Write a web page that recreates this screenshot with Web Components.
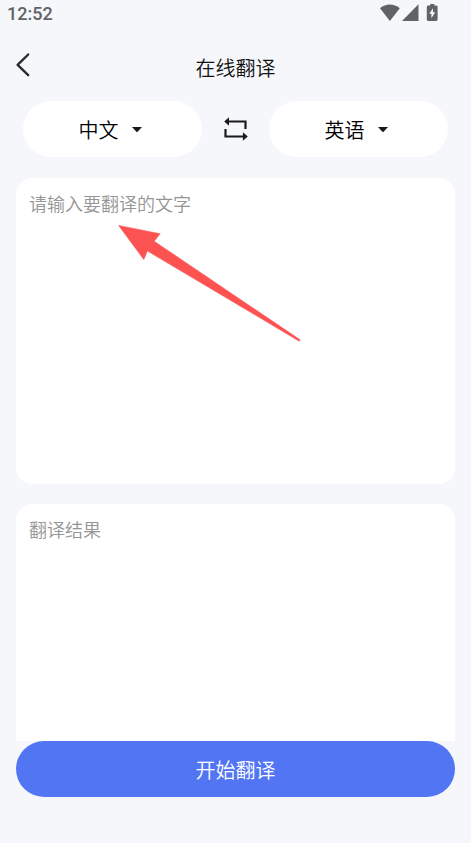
<!DOCTYPE html>
<html lang="zh-CN">
<head>
<meta charset="utf-8">
<meta name="viewport" content="width=device-width, initial-scale=1">
<title>在线翻译</title>
<style>
  html, body { margin: 0; }
  body {
    background: #f6f7fb;
    color: #111;
    font-family: "Noto Sans CJK SC", sans-serif;
    font-weight: 350;
  }
</style>
</head>
<body>
<translate-page></translate-page>

<script>
const define = (name, html, setup) => {
  const template = document.createElement('template');
  template.innerHTML = html;
  customElements.define(name, class extends HTMLElement {
    constructor() {
      super();
      this.attachShadow({ mode: 'open' }).append(template.content.cloneNode(true));
    }
    connectedCallback() {
      if (setup) setup(this, this.shadowRoot);
    }
  });
};

define('status-bar', `
  <style>
    :host { display: flex; align-items: center; justify-content: space-between; height: 26px; padding: 0 31px 0 7px; color: #616265; }
    time { padding-top: 2px; font: 500 18px/26px Roboto, sans-serif; }
    svg { display: block; }
  </style>
  <time>12:52</time>
  <svg width="60" height="20" viewBox="0 0 60 20" fill="currentColor" aria-hidden="true">
    <path d="M0 5.200C6 .4 13.800 .4 19.800 5.200L9.900 18Z"/>
    <path d="M38.500 1.200V18H22Z"/>
    <path d="M50.200 1h4v1.600h2q1.400 0 1.400 1.400v12.600q0 1.400-1.400 1.400h-8q-1.400 0-1.400-1.400V4q0-1.400 1.400-1.400h2z"/>
    <path d="M53 5.200v4h2.200l-3.800 6v-4.400h-2.200z" fill="#f6f7fb"/>
  </svg>`);

define('title-bar', `
  <style>
    :host { display: grid; grid-template-columns: 48px 1fr 48px; align-items: center; height: 75px; }
    button { display: flex; align-items: center; width: 48px; height: 48px; margin: 0; padding: 0 0 0 14px; border: 0; background: none; color: #2b2b2d; }
    h1 { margin: 0; padding-top: 8px; font-size: 20px; line-height: 28px; font-weight: inherit; text-align: center; }
  </style>
  <button type="button" aria-label="返回">
    <svg width="18" height="26" viewBox="0 0 18 26" fill="none" stroke="currentColor" stroke-width="2.400" stroke-linecap="round" stroke-linejoin="round"><path d="M14.200 3.500 3.600 13.800 14.200 24.200"/></svg>
  </button>
  <h1><slot></slot></h1>`);

define('language-picker', `
  <style>
    :host { display: block; min-width: 0; }
    label { display: flex; align-items: center; justify-content: center; gap: 10px; height: 56px; padding-right: 2px; border-radius: 28px; background: #fff; }
    select { appearance: none; margin: 0; padding: 2px 0 0; border: 0; background: none; color: #000; font: inherit; font-size: 20px; line-height: 28px; }
    svg { display: block; }
  </style>
  <label>
    <select></select>
    <svg width="16" height="16" viewBox="0 0 16 16" fill="#1a1a1c" aria-hidden="true"><path d="M3 6h10L8.600 10.700q-.6.6-1.200 0z"/></svg>
  </label>`, (host, root) => {
    const select = root.querySelector('select');
    select.setAttribute('aria-label', host.getAttribute('label'));
    for (const name of ['中文', '英语']) {
      select.add(new Option(name, name, false, name === host.getAttribute('value')));
    }
  });

define('language-bar', `
  <style>
    :host { display: grid; grid-template-columns: 1fr 67px 1fr; align-items: center; padding: 0 23px; }
    button { display: flex; justify-self: center; margin: 0; padding: 8px; border: 0; background: none; color: #1a1a1c; }
  </style>
  <language-picker label="源语言" value="中文"></language-picker>
  <button type="button" aria-label="交换语言">
    <svg width="24" height="24" viewBox="0 0 24 24" fill="none" stroke="currentColor" stroke-width="2.200">
      <path d="M4 4.500H21.500V12M1.500 12V19.500H20"/>
      <path d="M.2 4.500 5 .3v8.400zM23.800 19.500l-4.900-4.200v8.400z" fill="currentColor" stroke="none"/>
    </svg>
  </button>
  <language-picker label="目标语言" value="英语"></language-picker>`);

define('text-card', `
  <style>
    :host { display: flex; position: relative; overflow: hidden; border-radius: 16px; background: #fff; }
    textarea { flex: 1; min-width: 0; box-sizing: border-box; margin: 0; padding: 12px 13px; border: 0; outline: 0; resize: none; background: none; color: #111; font: inherit; font-size: 18px; line-height: 26px; }
    textarea::placeholder { color: #959595; opacity: 1; }
  </style>
  <textarea></textarea>
  <slot></slot>`, (host, root) => {
    const area = root.querySelector('textarea');
    area.placeholder = host.getAttribute('placeholder');
    area.setAttribute('aria-label', area.placeholder);
    area.readOnly = host.hasAttribute('readonly');
  });

define('pointer-arrow', `
  <style>
    :host { position: absolute; left: 102px; top: 46px; pointer-events: none; }
    svg { display: block; }
  </style>
  <svg width="184" height="120" viewBox="0 0 184 120" fill="#fc5352" aria-hidden="true">
    <path d="M.6 1.400 42.200 9.700 36.200 17.200 182.200 115.800 181.200 117.200 29.400 27 25.800 35.600Z" stroke="#fc5352" stroke-width=".5"/>
  </svg>`);

define('primary-button', `
  <style>
    :host { display: block; }
    button { display: block; width: 100%; height: 56px; margin: 0; padding: 2px 0 0; border: 0; border-radius: 28px; background: #5275f3; color: #fff; font: inherit; font-size: 20px; line-height: 28px; }
  </style>
  <button type="button"><slot></slot></button>`);

define('translate-page', `
  <style>
    :host { display: flex; flex-direction: column; min-height: 100vh; }
    main { flex: 1; display: flex; flex-direction: column; padding: 21px 16px 46px; }
    .source { min-height: 306px; margin-bottom: 20px; }
    .result { flex: 1; min-height: 160px; border-radius: 16px 16px 0 0; }
  </style>
  <status-bar></status-bar>
  <title-bar>在线翻译</title-bar>
  <language-bar></language-bar>
  <main>
    <text-card class="source" placeholder="请输入要翻译的文字"><pointer-arrow></pointer-arrow></text-card>
    <text-card class="result" placeholder="翻译结果" readonly></text-card>
    <primary-button>开始翻译</primary-button>
  </main>`);
</script>
</body>
</html>
